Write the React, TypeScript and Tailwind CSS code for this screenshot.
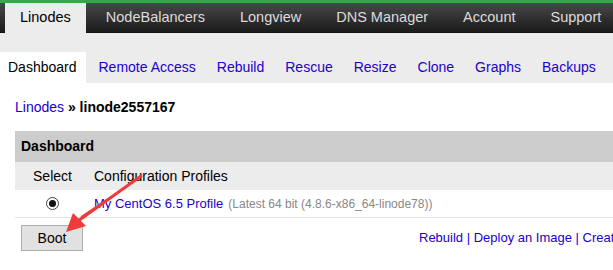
import React from 'react';

const topNav = ['Linodes', 'NodeBalancers', 'Longview', 'DNS Manager', 'Account', 'Support'];
const subNav = ['Dashboard', 'Remote Access', 'Rebuild', 'Rescue', 'Resize', 'Clone', 'Graphs', 'Backups'];

export default function App() {
  return (
    <div
      className="relative w-[613px] h-[270px] overflow-hidden bg-white text-black"
      style={{ fontFamily: '"Liberation Sans", Arial, sans-serif' }}
    >
      {/* green strip */}
      <div className="h-[3px] bg-[#37a845]" />

      {/* main nav */}
      <div className="flex h-[30px] pl-[5px] gap-[5px] bg-gradient-to-b from-[#4a4949] to-[#1b1b1b] border-b border-[#111] whitespace-nowrap">
        {topNav.map((item, i) => (
          <div
            key={item}
            className={
              i === 0
                ? 'flex shrink-0 items-center px-[15px] -mb-px bg-[#ececec] text-black text-[14.5px]'
                : 'flex shrink-0 items-center px-[15px] text-[#dcdcdc] text-[14.5px]'
            }
          >
            {item}
          </div>
        ))}
      </div>

      {/* sub nav */}
      <div className="flex items-end h-[50px] gap-[5px] bg-[#ececec] whitespace-nowrap">
        {subNav.map((item, i) => (
          <div
            key={item}
            className={
              i === 0
                ? 'flex shrink-0 items-center h-[31px] px-[8px] pr-[9px] bg-white text-black text-[14px]'
                : 'flex shrink-0 items-center h-[31px] px-[8px] text-[#2200cc] text-[14px]'
            }
          >
            {item}
          </div>
        ))}
      </div>

      {/* breadcrumb */}
      <div className="pl-[15px] pt-[14px] h-[48px] text-[14px]">
        <span className="text-[#2200cc]">Linodes</span>
        <span className="font-bold"> » linode2557167</span>
      </div>

      {/* dashboard table */}
      <div className="ml-[15px] w-[720px]">
        <div className="flex items-center h-[31px] pl-[6px] bg-[#cccccc] text-[14px] font-bold">Dashboard</div>
        <div className="flex items-center h-[28px] bg-[#ececec] text-[14px]">
          <div className="w-[75px] shrink-0 text-center">Select</div>
          <div className="pl-[4px]">Configuration Profiles</div>
        </div>
        <div className="flex items-center h-[28px] border-b border-[#e2e2e2] whitespace-nowrap">
          <div className="w-[75px] shrink-0 flex justify-center">
            <span className="flex items-center justify-center w-[13px] h-[13px] rounded-full border border-[#444] bg-white">
              <span className="w-[7px] h-[7px] rounded-full bg-[#111]" />
            </span>
          </div>
          <div className="pl-[4px] text-[13px] text-[#2200cc]">My CentOS 6.5 Profile</div>
          <div className="pl-[5px] text-[12px] text-[#888]">(Latest 64 bit (4.8.6-x86_64-linode78))</div>
        </div>
        <div className="flex items-center pt-[7px] whitespace-nowrap">
          <button className="shrink-0 ml-[6px] w-[62px] h-[26px] bg-[#e1e1e1] border border-[#adadad] text-[14px] text-black">
            Boot
          </button>
          <div className="shrink-0 ml-[336px] text-[13px] text-[#2200cc]">
            Rebuild | Deploy an Image | Create a new Configuration Profile
          </div>
        </div>
      </div>

      {/* annotation arrow */}
      <svg className="absolute left-0 top-0 pointer-events-none" width="613" height="270">
        <path d="M141 176 L83 218 L79 222 L81 216 Z" fill="#ee3b3b" />
        <path d="M141 176 L78 221" stroke="#ee3b3b" strokeWidth="3" strokeLinecap="round" />
        <polygon points="66,232 73,213 86,226" fill="#ee3b3b" />
      </svg>
    </div>
  );
}
